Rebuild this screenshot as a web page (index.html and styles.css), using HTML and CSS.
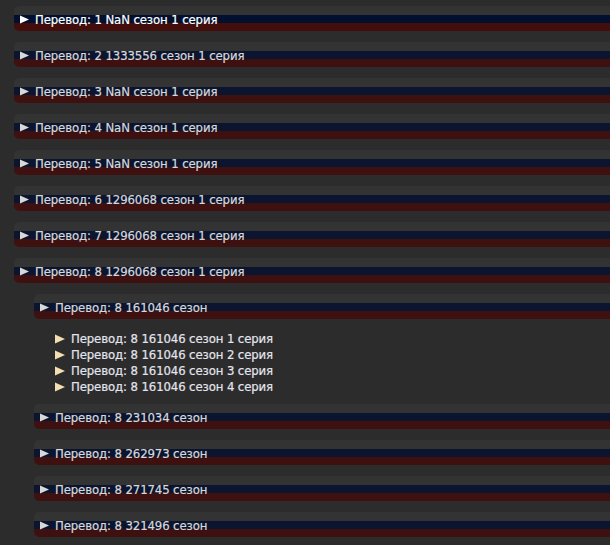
FILE: index.html
```html
<!DOCTYPE html>
<html lang="ru">
<head>
<meta charset="utf-8">
<title>Переводы</title>
<link rel="stylesheet" href="styles.css">
</head>
<body>
<div class="tree">
  <div class="node active"><div class="bar"><span class="label"><svg class="tri" viewBox="0 0 10 10"><polygon points="0,0.5 10,5 0,9.5"/></svg>Перевод: 1 NaN сезон 1 серия</span></div></div>
  <div class="node"><div class="bar"><span class="label"><svg class="tri" viewBox="0 0 10 10"><polygon points="0,0.5 10,5 0,9.5"/></svg>Перевод: 2 1333556 сезон 1 серия</span></div></div>
  <div class="node"><div class="bar"><span class="label"><svg class="tri" viewBox="0 0 10 10"><polygon points="0,0.5 10,5 0,9.5"/></svg>Перевод: 3 NaN сезон 1 серия</span></div></div>
  <div class="node"><div class="bar"><span class="label"><svg class="tri" viewBox="0 0 10 10"><polygon points="0,0.5 10,5 0,9.5"/></svg>Перевод: 4 NaN сезон 1 серия</span></div></div>
  <div class="node"><div class="bar"><span class="label"><svg class="tri" viewBox="0 0 10 10"><polygon points="0,0.5 10,5 0,9.5"/></svg>Перевод: 5 NaN сезон 1 серия</span></div></div>
  <div class="node"><div class="bar"><span class="label"><svg class="tri" viewBox="0 0 10 10"><polygon points="0,0.5 10,5 0,9.5"/></svg>Перевод: 6 1296068 сезон 1 серия</span></div></div>
  <div class="node"><div class="bar"><span class="label"><svg class="tri" viewBox="0 0 10 10"><polygon points="0,0.5 10,5 0,9.5"/></svg>Перевод: 7 1296068 сезон 1 серия</span></div></div>
  <div class="node"><div class="bar"><span class="label"><svg class="tri" viewBox="0 0 10 10"><polygon points="0,0.5 10,5 0,9.5"/></svg>Перевод: 8 1296068 сезон 1 серия</span></div>
    <div class="children">
      <div class="node"><div class="bar"><span class="label"><svg class="tri" viewBox="0 0 10 10"><polygon points="0,0.5 10,5 0,9.5"/></svg>Перевод: 8 161046 сезон</span></div>
        <ul class="eps">
          <li><svg class="tri" viewBox="0 0 10 10"><polygon points="0,0.5 10,5 0,9.5"/></svg>Перевод: 8 161046 сезон 1 серия</li>
          <li><svg class="tri" viewBox="0 0 10 10"><polygon points="0,0.5 10,5 0,9.5"/></svg>Перевод: 8 161046 сезон 2 серия</li>
          <li><svg class="tri" viewBox="0 0 10 10"><polygon points="0,0.5 10,5 0,9.5"/></svg>Перевод: 8 161046 сезон 3 серия</li>
          <li><svg class="tri" viewBox="0 0 10 10"><polygon points="0,0.5 10,5 0,9.5"/></svg>Перевод: 8 161046 сезон 4 серия</li>
        </ul>
      </div>
      <div class="node"><div class="bar"><span class="label"><svg class="tri" viewBox="0 0 10 10"><polygon points="0,0.5 10,5 0,9.5"/></svg>Перевод: 8 231034 сезон</span></div></div>
      <div class="node"><div class="bar"><span class="label"><svg class="tri" viewBox="0 0 10 10"><polygon points="0,0.5 10,5 0,9.5"/></svg>Перевод: 8 262973 сезон</span></div></div>
      <div class="node"><div class="bar"><span class="label"><svg class="tri" viewBox="0 0 10 10"><polygon points="0,0.5 10,5 0,9.5"/></svg>Перевод: 8 271745 сезон</span></div></div>
      <div class="node"><div class="bar"><span class="label"><svg class="tri" viewBox="0 0 10 10"><polygon points="0,0.5 10,5 0,9.5"/></svg>Перевод: 8 321496 сезон</span></div></div>
    </div>
  </div>
</div>
</body>
</html>
```

FILE: styles.css
```css
html, body {
  margin: 0;
  padding: 0;
  background: #2c2c2c;
  overflow: hidden;
}

body {
  font-family: "DejaVu Sans Condensed", "DejaVu Sans", sans-serif;
  font-stretch: condensed;
  font-size: 13px;
  letter-spacing: -0.1px;
  color: #d8d8d8;
  -webkit-text-stroke: 0.2px currentColor;
}

.tree {
  padding: 6px 0 0 14px;
}

.children {
  padding-left: 20px;
}

.bar {
  background: #333333;
  border-radius: 5px 0 0 5px;
  padding-top: 9px;
  margin-bottom: 11px;
}

.label {
  display: flex;
  align-items: center;
  height: 16px;
  line-height: 9px;
  padding: 0 0 7px 6px;
  box-sizing: border-box;
  white-space: nowrap;
  border-radius: 0 0 0 5px;
  background: linear-gradient(to bottom, #0b1530 0, #0b1530 8px, #3e1010 8px, #3e1010 16px);
}

.active .label {
  color: #ffffff;
  background: linear-gradient(to bottom, #00102e 0, #00102e 8px, #420d0a 8px, #420d0a 16px);
}

.tri {
  width: 9px;
  height: 9px;
  margin-right: 6px;
  flex: none;
  fill: currentColor;
}

.eps {
  list-style: none;
  margin: 0 0 9px;
  padding: 1px 0 0 21px;
  line-height: 16px;
  color: #e4e4ee;
}

.eps li {
  display: flex;
  align-items: center;
  white-space: nowrap;
}

.eps .tri {
  width: 10px;
  height: 10px;
  margin-right: 6px;
  fill: #f2deb0;
}
```
